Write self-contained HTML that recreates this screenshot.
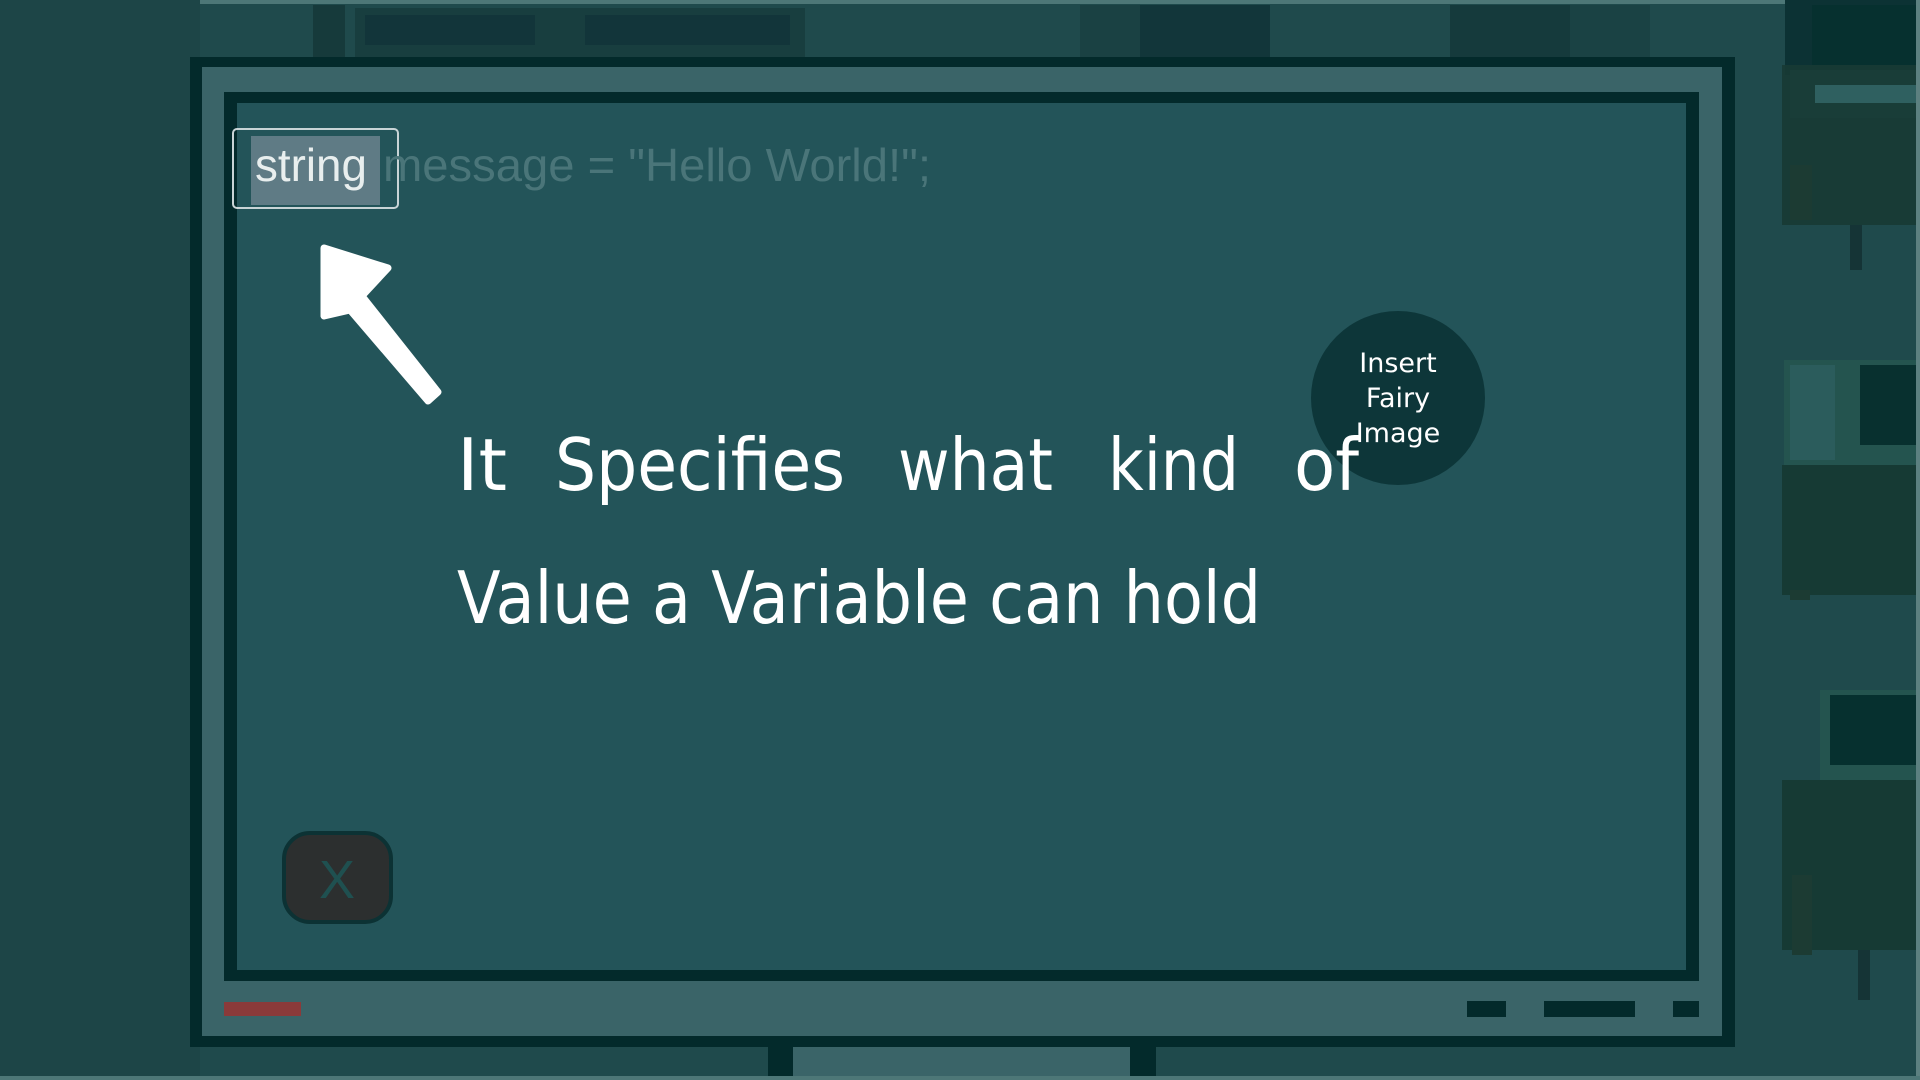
<!DOCTYPE html>
<html><head><meta charset="utf-8"><style>
html,body{margin:0;padding:0;width:1920px;height:1080px;overflow:hidden;background:#1f4a4c}
svg{display:block}
</style></head><body>
<svg width="1920" height="1080" viewBox="0 0 1920 1080" xmlns="http://www.w3.org/2000/svg" font-family="'DejaVu Sans','Liberation Sans',sans-serif">
<rect width="1920" height="1080" fill="#1f4a4c"/>
<rect x="0" y="0" width="1920" height="4" fill="#4d7777"/>
<rect x="0" y="0" width="200" height="1080" fill="#1d4547"/>
<!-- top furniture -->
<rect x="313" y="5" width="32" height="52" fill="#163a3b"/>
<rect x="355" y="8" width="450" height="49" fill="#183e3f"/>
<rect x="365" y="15" width="170" height="30" fill="#12353a"/>
<rect x="585" y="15" width="205" height="30" fill="#12353a"/>
<rect x="1080" y="5" width="60" height="52" fill="#1a4143"/>
<rect x="1140" y="5" width="130" height="52" fill="#12363a"/>
<rect x="1450" y="5" width="120" height="52" fill="#153a3c"/>
<rect x="1570" y="5" width="80" height="52" fill="#1a4244"/>
<!-- right computers -->
<rect x="1785" y="0" width="135" height="75" fill="#0c3234"/>
<rect x="1790" y="70" width="130" height="48" fill="#2a5a5a"/>
<rect x="1782" y="65" width="138" height="160" fill="#173a34" opacity="0.9"/>
<rect x="1812" y="5" width="108" height="60" fill="#06302f"/>
<rect x="1815" y="85" width="105" height="18" fill="#2f6060"/>
<rect x="1790" y="165" width="22" height="55" fill="#1c3b33"/>
<rect x="1850" y="225" width="12" height="45" fill="#153436"/>
<rect x="1784" y="360" width="136" height="110" fill="#24544f"/>
<rect x="1790" y="365" width="45" height="95" fill="#2b5c5c"/>
<rect x="1860" y="365" width="60" height="80" fill="#08302f"/>
<rect x="1782" y="465" width="138" height="130" fill="#163a34"/>
<rect x="1790" y="590" width="20" height="10" fill="#1c3b33"/>
<rect x="1820" y="690" width="100" height="90" fill="#24544f"/>
<rect x="1830" y="695" width="90" height="70" fill="#06302f"/>
<rect x="1782" y="780" width="138" height="170" fill="#163a34"/>
<rect x="1792" y="875" width="20" height="80" fill="#1c3b33"/>
<rect x="1858" y="950" width="12" height="50" fill="#153436"/>
<rect x="1916" y="0" width="4" height="1080" fill="#5c8080"/>
<!-- monitor -->
<rect x="190" y="57" width="1545" height="990" fill="#032a2b"/>
<rect x="202" y="67" width="1520" height="969" fill="#3a6468"/>
<rect x="224" y="92" width="1475" height="889" fill="#032a2b"/>
<rect x="237" y="103" width="1449" height="867" fill="#235459"/>
<rect x="224" y="1002" width="77" height="14" fill="#8a3a3a"/>
<rect x="1467" y="1001" width="39" height="16" fill="#032a2b"/>
<rect x="1544" y="1001" width="91" height="16" fill="#032a2b"/>
<rect x="1673" y="1001" width="26" height="16" fill="#032a2b"/>
<rect x="768" y="1047" width="25" height="33" fill="#032a2b"/>
<rect x="793" y="1047" width="337" height="33" fill="#3a6468"/>
<rect x="1130" y="1047" width="26" height="33" fill="#032a2b"/>
<rect x="0" y="1076" width="1920" height="4" fill="#4d7777"/>
<!-- code -->
<rect x="233" y="129" width="165" height="79" rx="4" fill="none" stroke="#c8d4d6" stroke-width="2"/>
<rect x="251" y="136" width="129" height="69" fill="#5f7b85"/>
<text x="255" y="181" font-family="'Liberation Sans',sans-serif" font-size="46" fill="#e8eeee" textLength="112" lengthAdjust="spacingAndGlyphs">string</text>
<text x="383" y="181" font-family="'Liberation Sans',sans-serif" font-size="46" fill="#4a7579" textLength="548" lengthAdjust="spacingAndGlyphs">message = "Hello World!";</text>
<!-- arrow -->
<path d="M324 248 L388 268 L362 296 L438 392 L428 401 L350 310 L324 316 Z" fill="#fff" stroke="#fff" stroke-width="7" stroke-linejoin="round"/>
<!-- circle -->
<circle cx="1398" cy="398" r="87" fill="#0d3639"/>
<g fill="#fff" font-size="27" text-anchor="middle">
<text x="1398" y="372">Insert</text>
<text x="1398" y="407">Fairy</text>
<text x="1398" y="442">Image</text>
</g>
<!-- main text -->
<g fill="#fff" font-size="72">
<text x="457" y="490" textLength="50" lengthAdjust="spacingAndGlyphs">It</text>
<text x="555" y="490" textLength="290" lengthAdjust="spacingAndGlyphs">Specifies</text>
<text x="898" y="490" textLength="155" lengthAdjust="spacingAndGlyphs">what</text>
<text x="1108" y="490" textLength="131" lengthAdjust="spacingAndGlyphs">kind</text>
<text x="1294" y="490" textLength="65" lengthAdjust="spacingAndGlyphs">of</text>
<text x="457" y="623" textLength="804" lengthAdjust="spacingAndGlyphs">Value a Variable can hold</text>
</g>
<!-- X button -->
<rect x="284" y="833" width="107" height="89" rx="26" fill="#2c2f2f" stroke="#0c3234" stroke-width="4"/>
<text x="337" y="898" font-size="54" fill="#1f5050" text-anchor="middle" font-family="'Liberation Sans',sans-serif">X</text>
</svg>
</body></html>
